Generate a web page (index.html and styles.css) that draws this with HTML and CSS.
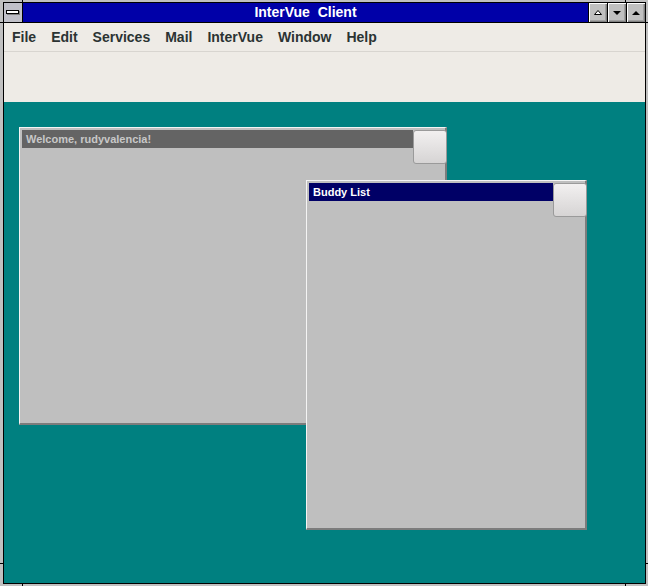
FILE: index.html
```html
<!DOCTYPE html>
<html lang="en">
<head>
    <meta charset="UTF-8">
    <title>InterVue Client</title>
    <link rel="stylesheet" href="styles.css">
</head>
<body>
    <div class="frame">
        <div class="app">
            <div class="titlebar">
                <div class="sysmenu"><span class="sysbar"></span></div>
                <div class="title">InterVue&nbsp; Client</div>
                <div class="tbtn">
                    <svg width="18" height="19" viewBox="0 0 18 19"><polygon points="5.5,11.5 9,7.5 12.5,11.5" fill="#fff" stroke="#000" stroke-width="1"/></svg>
                </div>
                <div class="tbtn">
                    <svg width="18" height="19" viewBox="0 0 18 19"><polygon points="5,8 13,8 9,12" fill="#000"/></svg>
                </div>
                <div class="tbtn">
                    <svg width="18" height="19" viewBox="0 0 18 19"><polygon points="5,12 13,12 9,8" fill="#000"/></svg>
                </div>
            </div>
            <div class="menubar">
                <span>File</span>
                <span>Edit</span>
                <span>Services</span>
                <span>Mail</span>
                <span>InterVue</span>
                <span>Window</span>
                <span>Help</span>
            </div>
            <div class="toolbar"></div>
            <div class="desktop">
                <div class="mdi welcome">
                    <div class="mdi-title">Welcome, rudyvalencia!</div>
                    <div class="mdi-btn"></div>
                </div>
                <div class="mdi buddy">
                    <div class="mdi-title">Buddy List</div>
                    <div class="mdi-btn"></div>
                </div>
            </div>
        </div>
        <i class="tick tick-top tl"></i>
        <i class="tick tick-top tr"></i>
        <i class="tick tick-bot tl"></i>
        <i class="tick tick-bot tr"></i>
        <i class="tick tick-side lt"></i>
        <i class="tick tick-side lb"></i>
        <i class="tick tick-side rt"></i>
        <i class="tick tick-side rb"></i>
    </div>
</body>
</html>
```

FILE: styles.css
```css
* { margin: 0; padding: 0; box-sizing: border-box; }
body {
    width: 648px;
    height: 586px;
    overflow: hidden;
    font-family: "Liberation Sans", Arial, sans-serif;
}
.frame {
    position: relative;
    width: 648px;
    height: 586px;
    background: #c0c0c0;
    padding: 2px 2px 2px 3px;
}
.app {
    height: 582px;
    border: 1px solid #000;
    display: flex;
    flex-direction: column;
}
.titlebar {
    height: 20px;
    display: flex;
    border-bottom: 1px solid #000;
}
.sysmenu {
    width: 19px;
    background: #c0c0c8;
    border-right: 1px solid #000;
    position: relative;
}
.sysbar {
    position: absolute;
    left: 2px;
    top: 7px;
    width: 13px;
    height: 4px;
    background: #fff;
    border: 1px solid #000;
    box-shadow: 1px 1px 0 #808080;
}
.title {
    flex: 1;
    background: #0000a8;
    color: #fff;
    font-weight: bold;
    font-size: 14px;
    line-height: 19px;
    text-align: center;
    white-space: pre;
}
.tbtn {
    width: 19px;
    border-left: 1px solid #000;
    background: #c0c0c0;
    box-shadow: inset 1px 1px 0 #fff, inset -1px -1px 0 #808080, inset -2px -2px 0 #a0a0a0;
}
.tbtn svg { display: block; }
.menubar {
    height: 29px;
    background: #eeebe6;
    border-bottom: 1px solid #d8d5d0;
    display: flex;
    gap: 15px;
    padding: 1px 0 0 8px;
    font-size: 14px;
    font-weight: bold;
    line-height: 27px;
    color: #2b3333;
}
.toolbar {
    height: 50px;
    background: #eeebe6;
}
.desktop {
    flex: 1;
    background: #008080;
    position: relative;
}
.mdi {
    position: absolute;
    background: #bfbfbf;
    border-top: 1px solid #f4f4f4;
    border-left: 1px solid #f4f4f4;
    border-right: 2px solid #7c7c7c;
    border-bottom: 2px solid #7c7c7c;
    padding: 2px;
}
.welcome {
    left: 15px;
    top: 25px;
    width: 428px;
    height: 298px;
}
.buddy {
    left: 302px;
    top: 78px;
    width: 281px;
    height: 350px;
}
.mdi-title {
    height: 18px;
    margin-right: 30px;
    padding-left: 4px;
    font-size: 11px;
    font-weight: bold;
    line-height: 18px;
    white-space: nowrap;
}
.welcome .mdi-title { background: #646464; color: #c8c8c8; }
.buddy .mdi-title { background: #000066; color: #fff; }
.mdi-btn {
    position: absolute;
    top: 2px;
    right: -2px;
    width: 34px;
    height: 34px;
    border: 1px solid #9a9a9a;
    border-radius: 3px;
    background: linear-gradient(#f2f0f0, #d6d4d4);
}
.tick {
    position: absolute;
    background: #000;
}
.tick-top { top: 0; width: 1px; height: 2px; }
.tick-bot { bottom: 0; width: 1px; height: 2px; }
.tl { left: 22px; }
.tr { left: 625px; }
.tick-side { width: 3px; height: 1px; }
.lt { left: 0; top: 22px; }
.lb { left: 0; top: 563px; }
.rt { right: 0; width: 2px; top: 22px; }
.rb { right: 0; width: 2px; top: 563px; }
```
